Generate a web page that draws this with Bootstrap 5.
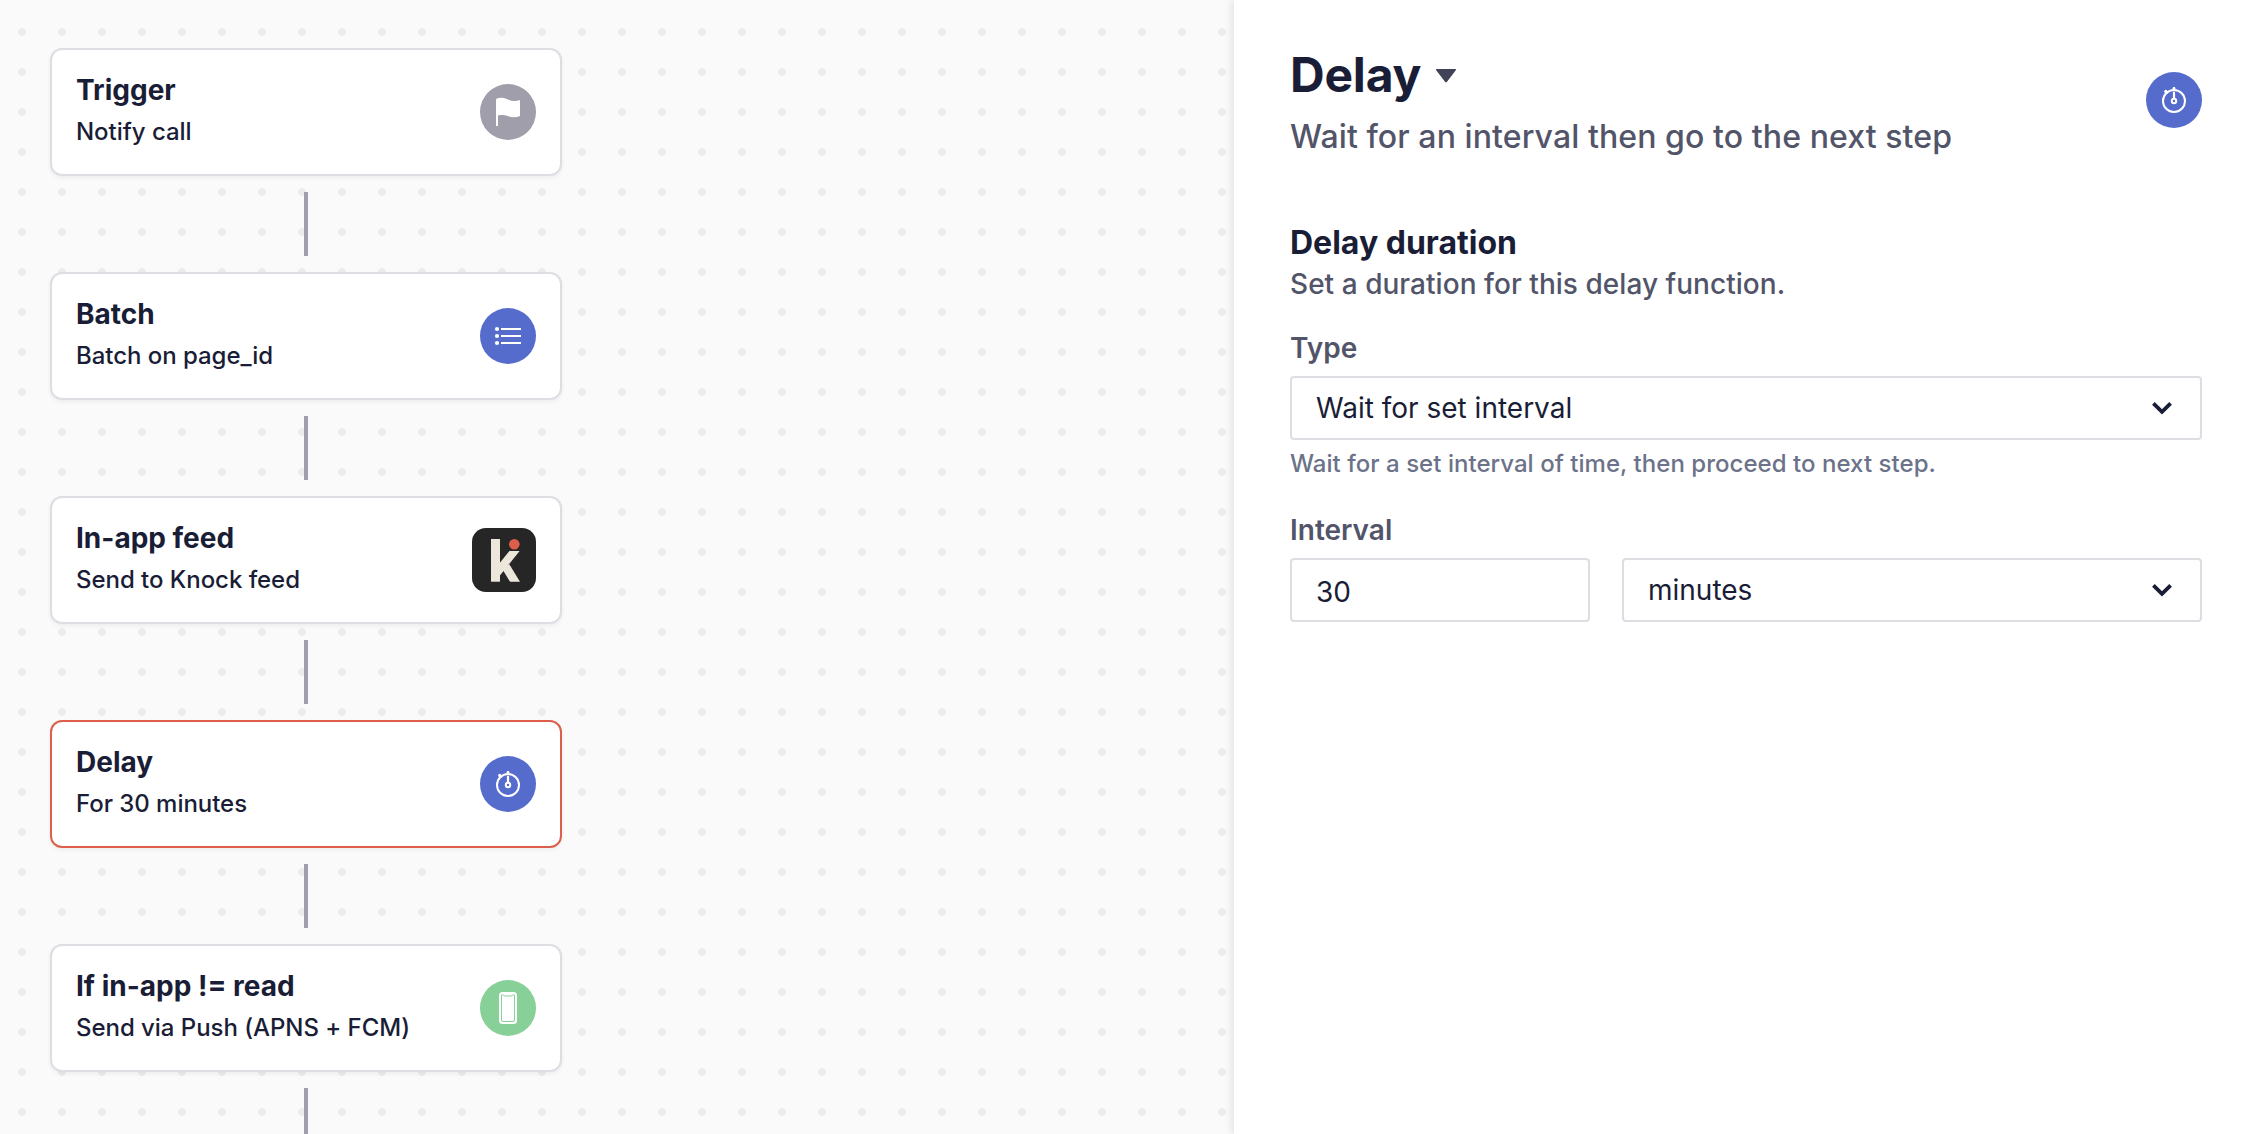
<!DOCTYPE html>
<html lang="en">
<head>
<meta charset="utf-8">
<title>Workflow editor</title>
<meta name="viewport" content="width=device-width, initial-scale=1">
<link href="https://cdn.jsdelivr.net/npm/bootstrap@5.3.0/dist/css/bootstrap.min.css" rel="stylesheet">
<style>
  body { font-family: Inter, "Liberation Sans", sans-serif; color: #1a1d36; }
  .flow-canvas {
    background: #fafafa radial-gradient(circle at 20px 20px, #ececec 3.6px, transparent 4.2px) 2px 12px / 40px 40px;
    padding: 48px 0 0 50px;
  }
  .flow-column { width: 512px; }
  .step {
    height: 128px; border: 2px solid #dddde3; border-radius: 12px; padding: 0 24px;
    box-shadow: 0 2px 4px rgba(30, 30, 60, .06);
  }
  .step-active { border-color: #dd5f4b; }
  .step-title { font-size: 28px; line-height: 40px; font-weight: 700; margin-top: 20px; }
  .step-note { font-size: 24px; line-height: 40px; font-weight: 500; letter-spacing: -.04px; margin-top: 2px; }
  .connector { width: 4px; height: 64px; margin: 16px 0; background: #9f9eaa; }
  .round-icon { width: 56px; height: 56px; }
  .panel { width: 1008px; padding: 47px 40px 0 56px; box-shadow: -2px 0 8px rgba(0, 0, 0, .1); z-index: 1; }
  .panel-title { font-size: 48px; line-height: 56px; font-weight: 700; letter-spacing: -.2px; }
  .title-caret { margin-left: 14px; }
  .panel-lead { font-size: 32px; line-height: 40px; font-weight: 500; letter-spacing: .09px; color: #525569; margin-top: 14px; }
  .panel-icon { margin-top: 25px; }
  .section-title { font-size: 32px; line-height: 40px; font-weight: 700; margin-top: 66px; }
  .section-note { font-size: 28px; line-height: 40px; font-weight: 500; letter-spacing: .04px; color: #525569; margin-top: 1px; }
  .field-label { font-size: 28px; line-height: 40px; font-weight: 600; color: #525569; margin-top: 24px; }
  .field { height: 64px; border: 2px solid #dddde3; border-radius: 4px; padding: 0 24px; font-size: 28px; line-height: 60px; background: #fff; }
  .field-number { width: 300px; padding-top: 2px; }
  .field-chevron { width: 24px; height: 24px; margin-right: 2px; }
  .field-hint { font-size: 24px; line-height: 32px; font-weight: 500; letter-spacing: .04px; color: #6b7289; margin: 8px 0 30px; }
  .field-row { gap: 32px; }
</style>
<script src="https://cdn.jsdelivr.net/npm/bootstrap@5.3.0/dist/js/bootstrap.bundle.min.js"></script>
</head>
<body>
<svg class="d-none" aria-hidden="true">
  <symbol id="timer" viewBox="0 0 56 56">
    <circle cx="28" cy="28" r="28" fill="#566ccd"/>
    <g fill="none" stroke="#fff" stroke-width="2" stroke-linecap="round">
      <circle cx="28" cy="29" r="11"/>
      <circle cx="28" cy="29" r="2.2"/>
      <path d="M28 20.5V26M28 16v2M19.700 19.500l1.200 1.200" stroke-width="2.200"/>
    </g>
    <circle cx="28" cy="16.400" r="1.400" fill="#fff"/><circle cx="19.800" cy="19.400" r="1.600" fill="#fff"/>
  </symbol>
  <symbol id="chevron" viewBox="0 0 24 24">
    <path d="M3.400 7.400 12 15.800l8.600-8.400" fill="none" stroke="#1a1d36" stroke-width="3.800"/>
  </symbol>
</svg>

<div class="d-flex vh-100 overflow-hidden">
  <main class="flow-canvas flex-grow-1 overflow-hidden">
    <div class="flow-column d-flex flex-column align-items-center">

      <div class="step w-100 bg-white d-flex justify-content-between align-items-center flex-shrink-0">
        <div class="align-self-start"><div class="step-title">Trigger</div><div class="step-note">Notify call</div></div>
        <svg class="round-icon" viewBox="0 0 56 56">
          <circle cx="28" cy="28" r="28" fill="#9f9eaa"/>
          <path d="M16 15c4-2 8-1.400 12 .5s8 2 12 .5v16c-4 1.800-8 1.500-12 .2s-7-1.300-10-.7V42h-2z" fill="#fff"/>
        </svg>
      </div>
      <div class="connector flex-shrink-0"></div>

      <div class="step w-100 bg-white d-flex justify-content-between align-items-center flex-shrink-0">
        <div class="align-self-start"><div class="step-title">Batch</div><div class="step-note">Batch on page_id</div></div>
        <svg class="round-icon" viewBox="0 0 56 56">
          <circle cx="28" cy="28" r="28" fill="#566ccd"/>
          <g fill="#fff"><circle cx="17" cy="21" r="2.100"/><circle cx="17" cy="28" r="2.100"/><circle cx="17" cy="35" r="2.100"/></g>
          <path d="M21 21h20M21 28h20M21 35h20" stroke="#fff" stroke-width="2"/>
        </svg>
      </div>
      <div class="connector flex-shrink-0"></div>

      <div class="step w-100 bg-white d-flex justify-content-between align-items-center flex-shrink-0">
        <div class="align-self-start"><div class="step-title">In-app feed</div><div class="step-note">Send to Knock feed</div></div>
        <svg width="64" height="64" viewBox="0 0 64 64">
          <rect width="64" height="64" rx="14" fill="#262626"/>
          <rect x="19" y="11" width="9" height="42.700" fill="#ede6db"/>
          <svg x="19" y="23" width="32" height="30.700" viewBox="19 23 32 30.700">
            <line x1="44.900" y1="20" x2="24" y2="46" stroke="#ede6db" stroke-width="8"/>
            <line x1="33.700" y1="38.500" x2="45" y2="57" stroke="#ede6db" stroke-width="8.500"/>
          </svg>
          <circle cx="42.300" cy="16.200" r="5.300" fill="#dd5f4b"/>
        </svg>
      </div>
      <div class="connector flex-shrink-0"></div>

      <div class="step step-active w-100 bg-white d-flex justify-content-between align-items-center flex-shrink-0">
        <div class="align-self-start"><div class="step-title">Delay</div><div class="step-note">For 30 minutes</div></div>
        <svg class="round-icon"><use href="#timer"/></svg>
      </div>
      <div class="connector flex-shrink-0"></div>

      <div class="step w-100 bg-white d-flex justify-content-between align-items-center flex-shrink-0">
        <div class="align-self-start"><div class="step-title">If in-app != read</div><div class="step-note">Send via Push (APNS + FCM)</div></div>
        <svg class="round-icon" viewBox="0 0 56 56">
          <circle cx="28" cy="28" r="28" fill="#87d098"/>
          <rect x="19" y="12" width="18" height="32" rx="3.500" fill="#fff"/>
          <path d="M23 14.500h-.3q-1.200 0-1.200 1.500v24q0 1.500 1.500 1.500h10q1.500 0 1.500-1.500V16q0-1.500-1.200-1.500H33q-.5 1.500-2 1.500h-6q-1.500 0-2-1.500z" fill="none" stroke="#87d098"/>
        </svg>
      </div>
      <div class="connector flex-shrink-0"></div>
    </div>
  </main>

  <aside class="panel bg-white flex-shrink-0">
    <header class="d-flex justify-content-between">
      <div>
        <div class="d-flex align-items-center">
          <h1 class="panel-title mb-0">Delay</h1>
          <svg class="title-caret" width="22" height="16" viewBox="0 0 22 16"><path d="M1.500 2h19q1 .4.3 1.300L12 14.700q-1 1-2 0L1.200 3.300Q.5 2.400 1.500 2z" fill="#404358"/></svg>
        </div>
        <div class="panel-lead">Wait for an interval then go to the next step</div>
      </div>
      <svg class="round-icon panel-icon"><use href="#timer"/></svg>
    </header>

    <h2 class="section-title mb-0">Delay duration</h2>
    <div class="section-note">Set a duration for this delay function.</div>

    <div class="field-label">Type</div>
    <div class="field d-flex justify-content-between align-items-center mt-2">
      <span>Wait for set interval</span>
      <svg class="field-chevron"><use href="#chevron"/></svg>
    </div>
    <div class="field-hint">Wait for a set interval of time, then proceed to next step.</div>

    <div class="field-label mt-0">Interval</div>
    <div class="field-row d-flex mt-2">
      <div class="field field-number">30</div>
      <div class="field flex-grow-1 d-flex justify-content-between align-items-center">
        <span>minutes</span>
        <svg class="field-chevron"><use href="#chevron"/></svg>
      </div>
    </div>
  </aside>
</div>
</body>
</html>
